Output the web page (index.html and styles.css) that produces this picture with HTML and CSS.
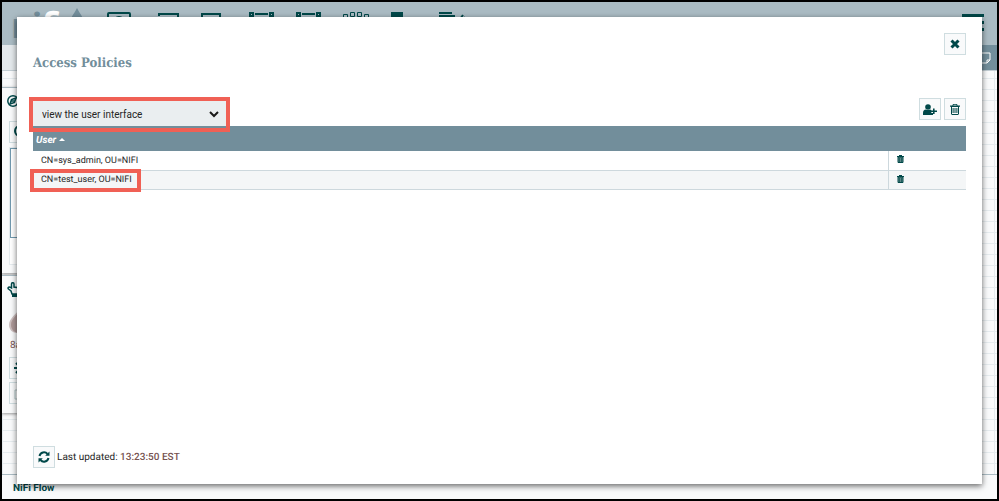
FILE: index.html
```html
<!DOCTYPE html>
<html lang="en">
<head>
  <meta charset="UTF-8">
  <meta name="viewport" content="width=device-width, initial-scale=1.0">
  <title>NiFi Flow</title>
  <link rel="stylesheet" href="styles.css">
</head>
<body>
  <!-- Flow editor -->
  <header class="header">
    <div class="logo">
      <span class="logo-ni">ni</span><span class="logo-fi">fi</span>
      <svg class="logo-drop" width="16" height="28" viewBox="0 0 16 28"><path d="M8 0C5 6 0 11 0 19a8 8 0 0 0 16 0C16 11 11 6 8 0z"/></svg>
    </div>
    <nav class="components">
      <button class="component" aria-label="Processor"><svg width="47" height="43" viewBox="0 0 47 43"><rect x="12" y="11" width="22" height="20" rx="1"/><circle cx="23" cy="20" r="6" class="fill"/></svg></button>
      <button class="component" aria-label="Input port"><svg width="47" height="43" viewBox="0 0 47 43"><path d="M16 14v-2h19v18H16v-2"/></svg></button>
      <button class="component" aria-label="Output port"><svg width="47" height="43" viewBox="0 0 47 43"><path d="M12 30V12h18v3M30 27v3H12"/></svg></button>
      <button class="component" aria-label="Process group"><svg width="47" height="43" viewBox="0 0 47 43"><path d="M13 11h3v3h-3zM33 11h3v3h-3zM18 12h13M14 16v12M34 16v12M13 28h3v3h-3zM33 28h3v3h-3zM18 30h13"/></svg></button>
      <button class="component" aria-label="Remote process group"><svg width="47" height="43" viewBox="0 0 47 43"><path d="M13 11h3v3h-3zM33 11h3v3h-3zM18 12h13M14 16v12M34 16v12M13 28h3v3h-3zM33 28h3v3h-3zM18 30h13"/></svg></button>
      <button class="component" aria-label="Funnel"><svg class="thin" width="47" height="43" viewBox="0 0 47 43"><path d="M12.500 12.500h4v5h-4zM19.500 10.500h4v4h-4zM26.500 10.500h4v4h-4zM33.500 12.500h4v5h-4zM18 21h13l-4 10h-5z"/></svg></button>
      <button class="component" aria-label="Template"><svg width="47" height="43" viewBox="0 0 47 43"><path class="fill" d="M13 10h12v6H13zM10 20h18v10H10z"/></svg></button>
      <button class="component" aria-label="Label"><svg width="47" height="43" viewBox="0 0 47 43"><path d="M14 11h13M14 14h16M14 19h13M14 24h10M38 13l-8 11-2 5 5-3 7-11"/></svg></button>
    </nav>
    <button class="menu" aria-label="Global menu"><svg width="22" height="18" viewBox="0 0 22 18"><path d="M0 0h22v3H0zM2 7h20v3H2zM2 14h20v3H2z"/></svg></button>
  </header>
  <div class="status">
    <button class="notes" aria-label="Bulletins"><svg width="12" height="12" viewBox="0 0 12 12"><path d="M1 1h10v7l-3 3H1zM11 8H8v3"/></svg></button>
  </div>
  <main class="canvas">
    <section class="panel navigate" aria-label="Navigate">
      <svg class="panel-icon" width="12" height="12" viewBox="0 0 12 12"><circle cx="6" cy="6" r="5.200"/><path d="M9 3L7.500 7.500 3 9l1.500-4.500zM4.500 6h3"/></svg>
      <button class="tool" aria-label="Zoom in"><svg width="14" height="14" viewBox="0 0 14 14"><circle cx="6" cy="6" r="5"/><path d="M10 10l3 3M4 6h4M6 4v4"/></svg></button>
      <div class="birdseye"><div class="brush"></div></div>
    </section>
    <section class="panel operate" aria-label="Operate">
      <svg class="panel-icon" width="16" height="15" viewBox="0 0 16 15"><path d="M5 12L4 9 1.500 7C.5 6 1.500 4.500 3 5.200L4.500 6V2c0-1.700 2.500-1.700 2.500 0v3l6 1v4l-1 2z"/><path class="fill" d="M5 12h8v3H5z"/></svg>
      <svg class="drop" width="20" height="22" viewBox="0 0 20 22"><path d="M9 0C6 4 0 8 0 14c0 5 4 8 8 8z" opacity=".6"/><path d="M11 0C8 4 2 8 2 14c0 5 4 8 9 8s9-3 9-8S14 4 11 0z"/></svg>
      <div class="group-id">8a7e2b91</div>
      <button class="tool" aria-label="Configure"><svg width="14" height="14" viewBox="0 0 14 14"><circle class="hub" cx="7" cy="7" r="4"/><path d="M7 0v3M7 11v3M0 7h3M11 7h3M2 2l2 2M10 10l2 2M12 2l-2 2M4 10l-2 2"/></svg></button>
      <button class="tool faded" aria-label="Paste"><svg width="14" height="14" viewBox="0 0 14 14"><path d="M4 4V1h9v9h-3M1 4h9v9H1z"/></svg></button>
    </section>
  </main>
  <footer class="breadcrumbs"><a href="#">NiFi Flow</a></footer>

  <!-- Access policies dialog -->
  <div class="dialog" role="dialog" aria-labelledby="dialog-title">
    <div class="dialog-header">
      <h1 id="dialog-title">Access Policies</h1>
      <button class="icon-button" aria-label="Close"><svg width="10" height="10" viewBox="0 0 10 10"><path class="cross" d="M1.500 1.500l7 7M8.500 1.500l-7 7"/></svg></button>
    </div>
    <div class="policy-bar">
      <div class="policy-select highlight">
        <select aria-label="Policy">
          <option>view the user interface</option>
        </select>
        <svg class="chevron" width="10" height="7" viewBox="0 0 10 7"><path d="M1 1l4 4 4-4"/></svg>
      </div>
      <div class="policy-actions">
        <button class="icon-button" aria-label="Add user"><svg width="14" height="11" viewBox="0 0 14 11"><circle cx="5" cy="3" r="2.800"/><path d="M0 11V9c0-2 1-3.500 3-3.500 1 .8 3 .8 4 0 .5 0 1 .2 1.300.5V9H10v2zM10 4.500h1.600v2H14v1.600h-2.400v2H10v-2H8V6.500h2z"/></svg></button>
        <button class="icon-button" aria-label="Delete policy"><svg width="10" height="11" viewBox="0 0 10 11"><path fill-rule="evenodd" d="M3 0h4l.6 1.500H10v1.300H9V10l-1 1H2l-1-1V2.800H0V1.500h2.400zM3.600.8l-.3.7h3.400l-.3-.7zM2 3v7h6V3z"/><path d="M2.600 4h1v5h-1zM4.500 4h1v5h-1zM6.400 4h1v5h-1z"/></svg></button>
      </div>
    </div>
    <table class="users">
      <thead>
        <tr><th>User <svg width="6" height="3" viewBox="0 0 6 3"><path d="M0 3l3-3 3 3z"/></svg></th><th class="actions"></th></tr>
      </thead>
      <tbody>
        <tr>
          <td>CN=sys_admin, OU=NIFI</td>
          <td class="actions"><button aria-label="Remove CN=sys_admin"><svg width="7" height="8" viewBox="0 0 7 8"><path d="M2 0h3v1h2v1H0V1h2z"/><path class="can" d="M1 2h5v5.500H1z"/><path class="ribs" d="M2.500 3v4M4.500 3v4"/></svg></button></td>
        </tr>
        <tr>
          <td><span class="highlight user-name">CN=test_user, OU=NIFI</span></td>
          <td class="actions"><button aria-label="Remove CN=test_user"><svg width="7" height="8" viewBox="0 0 7 8"><path d="M2 0h3v1h2v1H0V1h2z"/><path class="can" d="M1 2h5v5.500H1z"/><path class="ribs" d="M2.500 3v4M4.500 3v4"/></svg></button></td>
        </tr>
      </tbody>
    </table>
    <div class="refresh">
      <button class="icon-button" aria-label="Refresh"><svg width="12" height="12" viewBox="0 0 12 12"><path class="arc" d="M1.500 5A4.600 4.600 0 0 1 9.500 3M10.500 7A4.600 4.600 0 0 1 2.500 9"/><path d="M11.500.5v4.300H7.200zM.5 11.500V7.200h4.300z"/></svg></button>
      <span>Last updated: <time>13:23:50 EST</time></span>
    </div>
  </div>
</body>
</html>
```
FILE: styles.css
```css
* { box-sizing: border-box; }
body {
  display: flex; flex-direction: column;
  margin: 0; min-height: 100vh;
  border: 2px solid #000;
  font-family: Roboto, sans-serif; font-size: 10px; color: #262626;
  background: #f9fafb; text-rendering: geometricPrecision;
}
button { padding: 0; border: 0; background: none; }
svg { display: block; fill: #004849; }

/* Toolbar */
.header {
  display: flex; height: 43px; padding-right: 13px;
  background: #aabbc3;
}
.logo {
  display: flex; align-items: flex-start; width: 94px; padding: 0 0 0 10px;
  font-size: 36px; line-height: 48px; font-weight: bold;
}
.logo-ni { color: #728e9b; }
.logo-fi { color: #fff; }
.logo-drop { margin: 6px 0 0 5px; fill: #728e9b; }
.components { display: flex; flex: 1; }
.component svg { fill: none; stroke: #004849; stroke-width: 2; }
.component .thin { stroke-width: 1; }
.component .fill { fill: #004849; stroke: none; }
.menu { align-self: flex-start; padding-top: 12px; }

.status {
  display: flex; justify-content: flex-end; height: 26px;
  background: #e3e8eb; border-bottom: 1px solid #c3ced4;
}
.notes { width: 50px; padding: 0 6px; background: #728e9b; }
.notes svg { margin-left: auto; fill: none; stroke: #fff; }

/* Canvas with grid lines */
.canvas {
  flex: 1; padding-top: 16px;
  background-image:
    linear-gradient(#e5ebee 1px, transparent 1px),
    linear-gradient(90deg, #e5ebee 1px, transparent 1px);
  background-size: 100% 11px, 62px 100%;
  background-position: 0 7px, 0 0;
}
.panel {
  width: 140px; padding: 7px 5px;
  background: #f9fafb; border-top: 1px solid #aabbc3;
  box-shadow: 0 1px 3px rgba(0,0,0,0.4);
}
.navigate { height: 186px; }
.operate { height: 138px; margin-top: 2px; padding-top: 6px; }
.panel-icon { fill: none; stroke: #004849; stroke-width: 1.5; }
.panel-icon .fill, .tool .hub { fill: #004849; stroke: none; }
.tool {
  display: block; width: 22px; height: 22px; margin: 3px 2px 0; padding: 0 4px;
  background: #f9fafb; border: 1px solid #cfdde0;
}
.tool svg { fill: none; stroke: #004849; stroke-width: 2; }
.navigate .tool { margin-top: 14px; }
.tool.faded svg { opacity: 0.3; stroke-width: 1; }
.birdseye { height: 118px; margin: 4px 2px; background: #fff; border: 1px solid #e5ebee; }
.brush { height: 90px; border: 1px solid #7098ad; }
.drop { margin: 14px 2px 0; fill: #ad9897; }
.group-id { margin: 5px 3px 3px; color: #775351; line-height: 16px; }

.breadcrumbs {
  height: 25px; padding: 0 11px;
  border-top: 1px solid #aabbc3; background: #f9fafb;
  font-weight: bold; line-height: 28px;
}
.breadcrumbs a { color: #004849; text-decoration: none; }

/* Dialog */
.dialog {
  position: absolute; top: 17px; right: 17px; bottom: 17px; left: 17px;
  display: flex; flex-direction: column;
  padding: 16px;
  background: #fff; box-shadow: 0 2px 6px rgba(0,0,0,0.6);
}
.dialog-header { display: flex; justify-content: space-between; align-items: flex-start; }
h1 {
  margin: 22px 0 0;
  font-family: "Roboto Slab", "DejaVu Serif Condensed", "DejaVu Serif", serif;
  font-size: 13px; line-height: 18px; color: #728e9b;
}
.icon-button {
  display: flex; align-items: center; justify-content: center;
  width: 22px; height: 22px;
  background: #f9fafb; border: 1px solid #cfdde0;
}
.cross { fill: none; stroke: #004849; stroke-width: 3; }
.policy-bar { display: flex; justify-content: space-between; margin-top: 25px; }
.policy-actions { display: flex; gap: 3px; }
.highlight { position: relative; }
.highlight::after {
  content: ""; position: absolute; inset: -4px;
  border: 4px solid #f06055; pointer-events: none;
}
.policy-select { width: 193px; height: 25px; margin-top: 3px; }
.policy-select::after { bottom: -6px; }
select {
  appearance: none; width: 100%; height: 100%; padding: 1px 9px 0;
  border: 0; border-radius: 0; background: #eaeef0;
  font-family: inherit; font-size: 10px; color: #262626;
}
.chevron { position: absolute; right: 7px; top: 10px; fill: none; stroke: #1a1a1a; stroke-width: 2; }

.users { width: 100%; border-collapse: collapse; }
.users th {
  height: 25px; padding: 3px 3px 0;
  background: #728e9b; color: #fff; text-align: left; font-style: italic;
}
.users th svg { display: inline-block; vertical-align: middle; fill: #fff; }
.users td { height: 19px; padding: 1px 8px 0; border-bottom: 1px solid #cdd8dd; font-size: 9px; }
.users tbody tr:nth-child(even) { background: #f4f6f7; }
.users .actions { width: 78px; }
.users td.actions { border-left: 1px solid #cdd8dd; }
.user-name::after { inset: -6px -9px -7px -11px; }
.can { fill: #5d8887; stroke: #004849; }
.ribs { stroke: #004849; opacity: 0.6; }

.refresh { display: flex; align-items: center; gap: 2px; margin-top: auto; }
.refresh time { color: #775351; font-weight: 500; }
.arc { fill: none; stroke: #004849; stroke-width: 2; }
```
